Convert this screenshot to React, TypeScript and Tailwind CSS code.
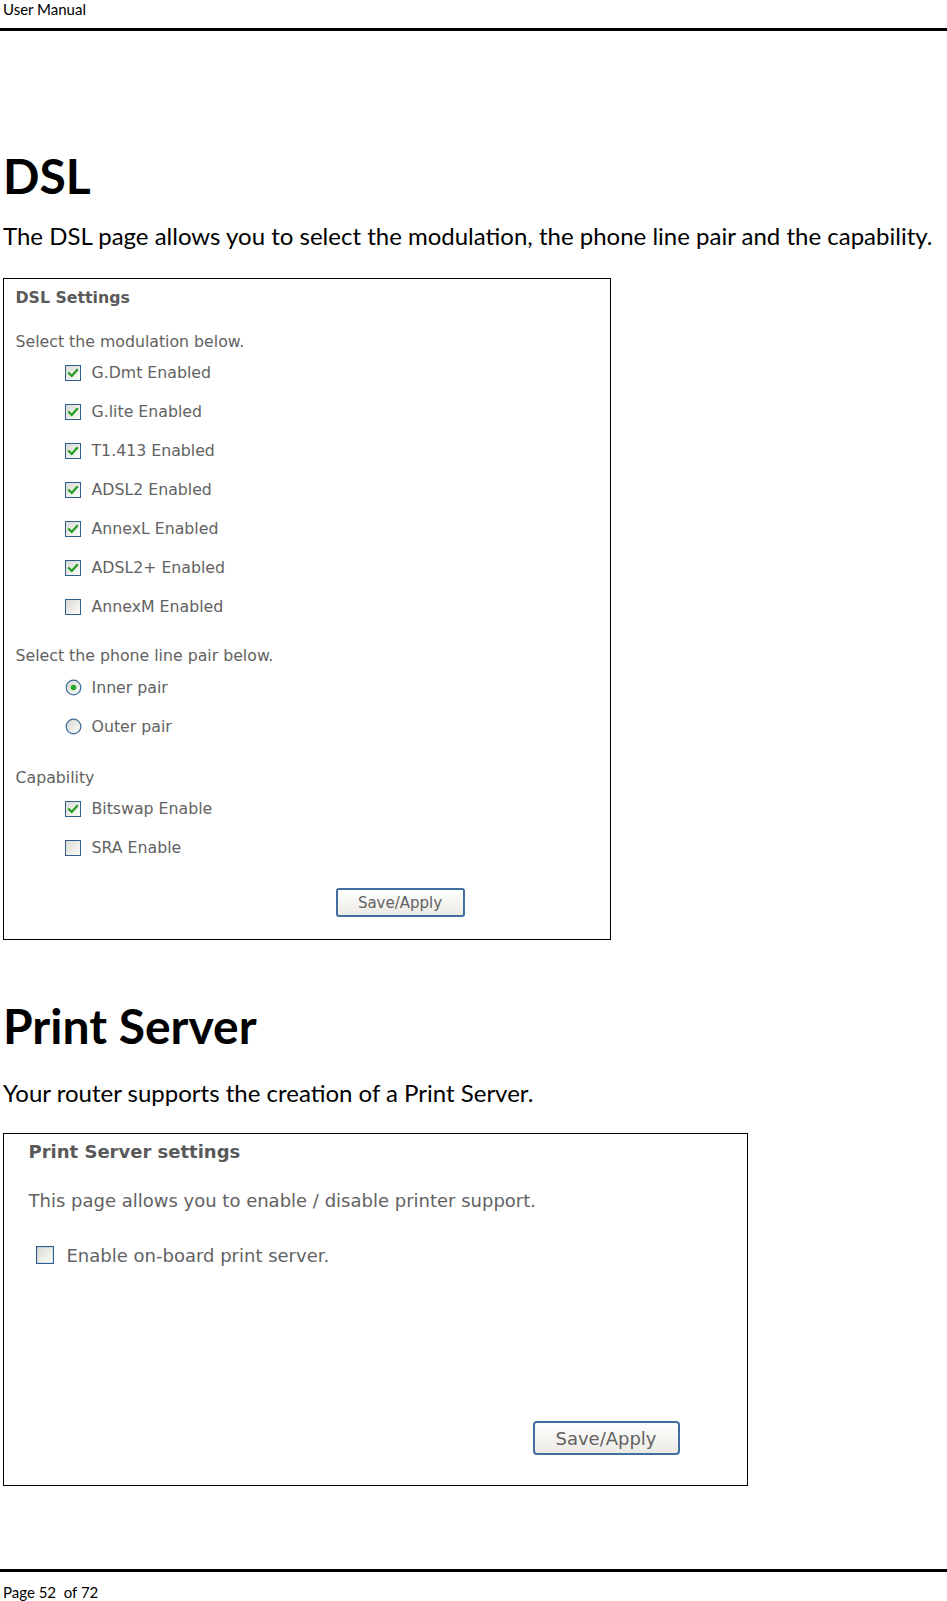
import type { ReactNode } from 'react';

const docFont = { fontFamily: 'Lato, "Open Sans", sans-serif' };
const uiFont = { fontFamily: '"DejaVu Sans", Verdana, sans-serif' };

const modulations = [
  { label: 'G.Dmt Enabled', checked: true },
  { label: 'G.lite Enabled', checked: true },
  { label: 'T1.413 Enabled', checked: true },
  { label: 'ADSL2 Enabled', checked: true },
  { label: 'AnnexL Enabled', checked: true },
  { label: 'ADSL2+ Enabled', checked: true },
  { label: 'AnnexM Enabled', checked: false },
];

const CheckBox = ({ checked, size = 16 }: { checked: boolean; size?: number }) => (
  <svg width={size} height={size} viewBox="0 0 16 16" className="shrink-0">
    <defs>
      <linearGradient id="cbFill" x1="0" y1="0" x2="1" y2="1">
        <stop offset="0" stopColor="#d9d9d2" />
        <stop offset="1" stopColor="#fdfdfb" />
      </linearGradient>
    </defs>
    <rect x="0.5" y="0.5" width="15" height="15" fill="url(#cbFill)" stroke="#2f5f8f" />
    {checked && (
      <path d="M4 8.2 L6.8 11 L12 5" fill="none" stroke="#1f9e1f" strokeWidth="2.2" strokeLinecap="square" />
    )}
  </svg>
);

const Radio = ({ checked }: { checked: boolean }) => (
  <svg width={17} height={17} viewBox="0 0 17 17" className="shrink-0">
    <defs>
      <linearGradient id="rbFill" x1="0" y1="0" x2="1" y2="1">
        <stop offset="0" stopColor="#d6d6cf" />
        <stop offset="1" stopColor="#fdfdfb" />
      </linearGradient>
    </defs>
    <circle cx="8.5" cy="8.5" r="7.3" fill="url(#rbFill)" stroke="#3f6c99" strokeWidth="1.2" />
    {checked && <circle cx="8.5" cy="8.5" r="2.8" fill="#27a827" />}
  </svg>
);

const Row = ({ children, gap = 'gap-[11px]' }: { children: ReactNode; gap?: string }) => (
  <div className={`h-[39px] flex items-center ml-[49px] ${gap}`}>{children}</div>
);

const SaveButton = ({ big }: { big?: boolean }) => (
  <button
    className={
      big
        ? 'w-[147px] h-[34px] rounded-[4px] border-2 border-[#3f6e9f] bg-gradient-to-b from-white to-[#ebeae4] text-[18px] text-[#626262]'
        : 'w-[129px] h-[29px] rounded-[3px] border-2 border-[#3f6e9f] bg-gradient-to-b from-white to-[#ebeae4] text-[15px] text-[#626262]'
    }
    style={uiFont}
  >
    Save/Apply
  </button>
);

export default function App() {
  return (
    <div className="w-[947px] h-[1601px] bg-white flex flex-col text-black" style={docFont}>
      {/* page header */}
      <div className="h-[28px] pl-[3px] text-[15px] leading-[18px]">User Manual</div>
      <div className="h-[3px] bg-black" />

      {/* DSL */}
      <h1 className="mt-[121px] h-[48px] pl-[3px] text-[48px] leading-[48px] font-bold">DSL</h1>
      <p className="mt-[22px] h-[28px] pl-[3px] text-[24px] leading-[28px] whitespace-nowrap">
        The DSL page allows you to select the modulation, the phone line pair and the capability.
      </p>

      <div className="mt-[28px] ml-[3px] w-[608px] h-[663px] border-[1.5px] border-black pl-[11.5px]" style={uiFont}>
        <div className="text-[#626262] text-[15.75px]">
          <div className="mt-[8.5px] h-[22px] leading-[22px] font-bold text-[#595959]">DSL Settings</div>
          <div className="mt-[21.5px] h-[22px] leading-[22px]">Select the modulation below.</div>
          <div className="mt-[0.5px]">
            {modulations.map((m) => (
              <Row key={m.label}>
                <CheckBox checked={m.checked} />
                <span>{m.label}</span>
              </Row>
            ))}
          </div>
          <div className="mt-[18.5px] h-[22px] leading-[22px]">Select the phone line pair below.</div>
          <div className="mt-[1px]">
            <Row gap="gap-[10px]">
              <Radio checked />
              <span>Inner pair</span>
            </Row>
            <Row gap="gap-[10px]">
              <Radio checked={false} />
              <span>Outer pair</span>
            </Row>
          </div>
          <div className="mt-[21px] h-[22px] leading-[22px]">Capability</div>
          <div className="mt-[0.5px]">
            <Row>
              <CheckBox checked />
              <span>Bitswap Enable</span>
            </Row>
            <Row>
              <CheckBox checked={false} />
              <span>SRA Enable</span>
            </Row>
          </div>
          <div className="mt-[21px] ml-[320px]">
            <SaveButton />
          </div>
        </div>
      </div>

      {/* Print Server */}
      <h1 className="mt-[62px] h-[48px] pl-[3px] text-[48px] leading-[48px] font-bold">Print Server</h1>
      <p className="mt-[29px] h-[28px] pl-[3px] text-[24px] leading-[28px]">Your router supports the creation of a Print Server.</p>

      <div className="mt-[26px] ml-[3px] w-[745px] h-[353px] border-[1.5px] border-black pl-[24.5px]" style={uiFont}>
        <div className="text-[#626262] text-[18px]">
          <div className="mt-[6px] h-[24px] leading-[24px] font-bold text-[#595959]">Print Server settings</div>
          <div className="mt-[25px] h-[24px] leading-[24px]">This page allows you to enable / disable printer support.</div>
          <div className="mt-[30px] h-[24px] flex items-center gap-[13px] ml-[7px]">
            <CheckBox checked={false} size={18} />
            <span>Enable on-board print server.</span>
          </div>
          <div className="mt-[154px] ml-[504px]">
            <SaveButton big />
          </div>
        </div>
      </div>

      {/* page footer */}
      <div className="mt-[83px] h-[3px] bg-black" />
      <div className="mt-[11px] pl-[3px] text-[15px] leading-[18px]">Page 52&nbsp; of 72</div>
    </div>
  );
}
